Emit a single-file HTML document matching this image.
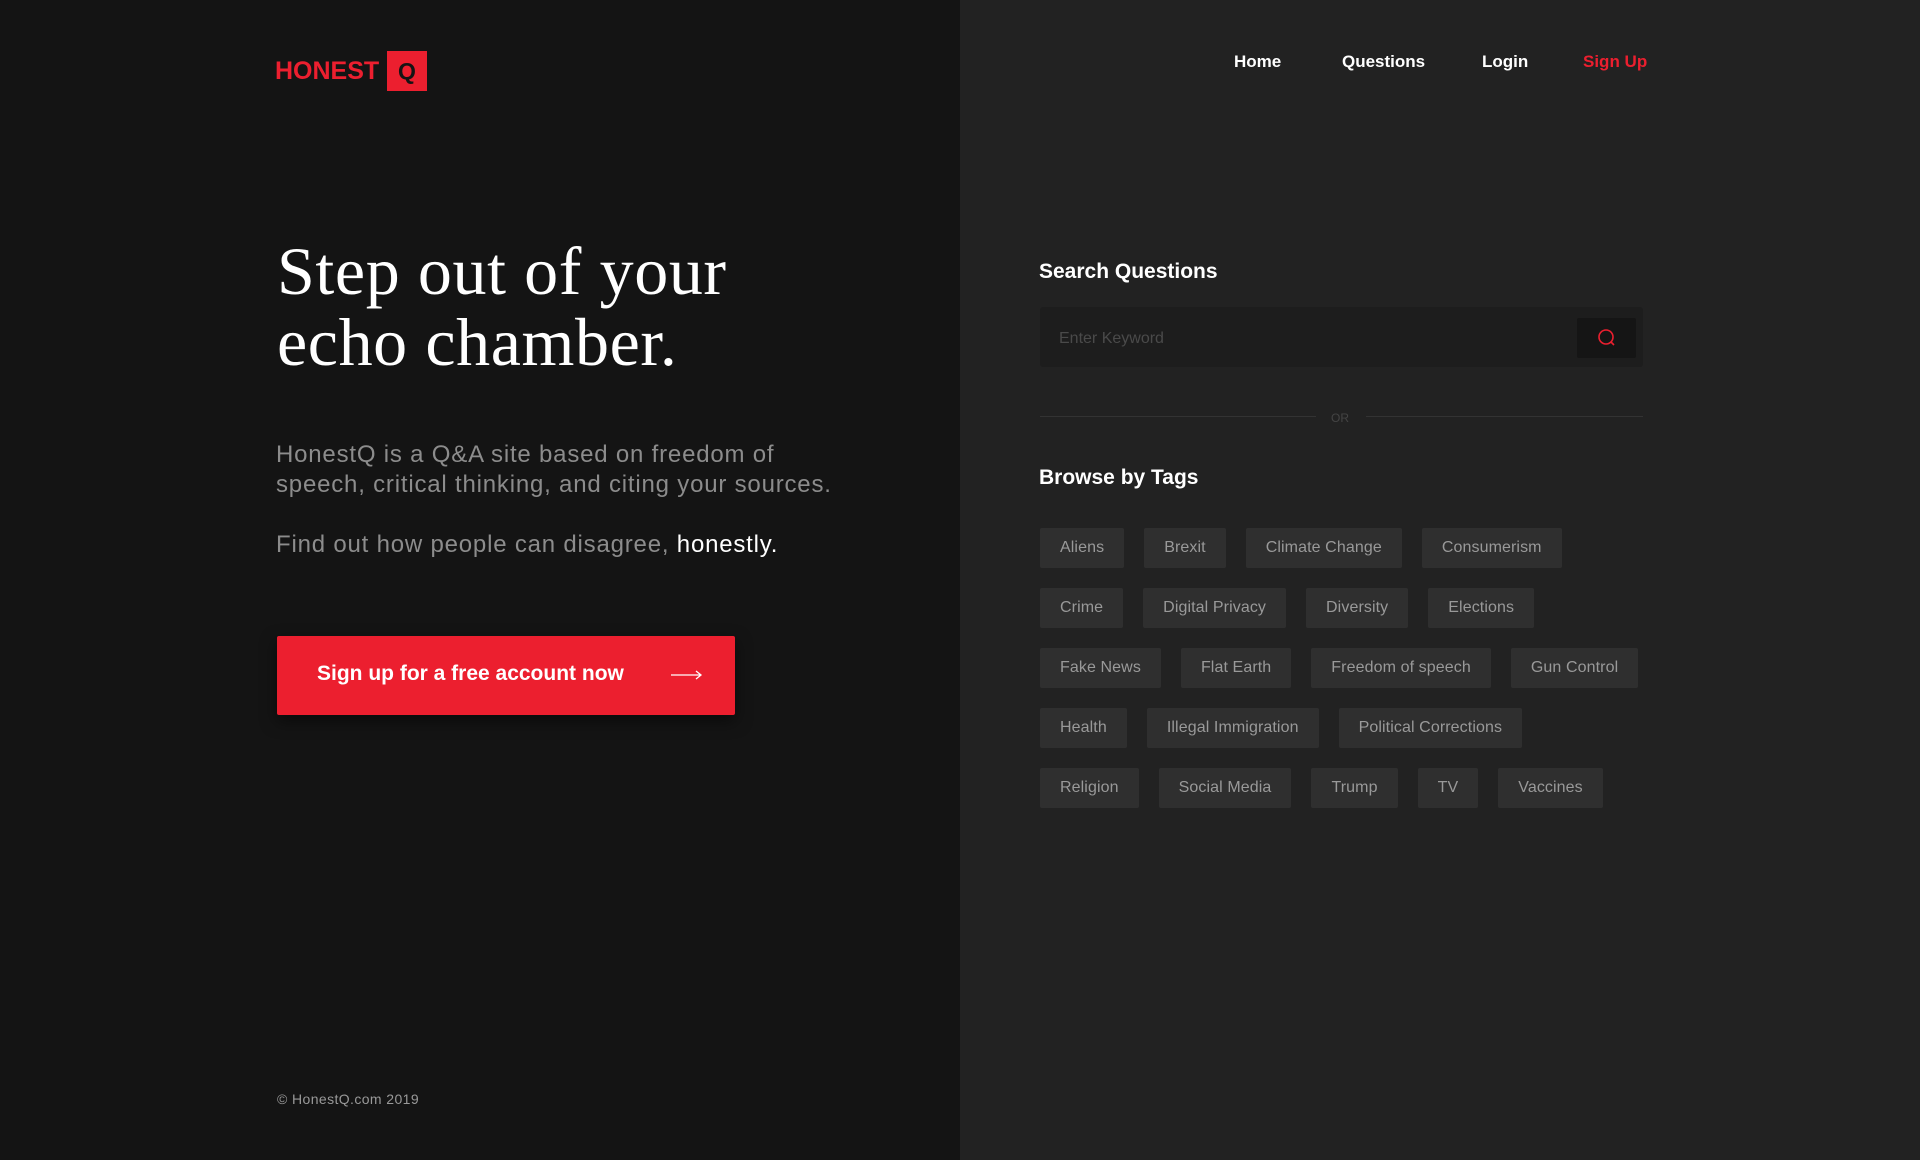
<!DOCTYPE html>
<html><head><meta charset="utf-8"><style>
*{margin:0;padding:0;box-sizing:border-box}
body{width:1920px;height:1160px;overflow:hidden;font-family:"Liberation Sans",sans-serif;background:#222}
.left{position:absolute;left:0;top:0;width:960px;height:1160px;background:#141414}
.right{position:absolute;left:960px;top:0;width:960px;height:1160px;background:#222}
.a{position:absolute;white-space:nowrap}
.logo{left:275px;top:57px;font-size:25px;font-weight:bold;color:#ec1f2f}
.qbox{left:387px;top:51px;width:40px;height:40px;background:#ec1f2f;color:#141414;font-weight:bold;font-size:23px;text-align:center;line-height:40px}
.h1{left:277px;top:236px;font-family:"Liberation Serif",serif;font-size:68px;line-height:71px;color:#fff;letter-spacing:0.6px}
.p{left:276px;font-size:24px;color:#8c8c8c;letter-spacing:0.8px}
.btn{left:277px;top:636px;width:458px;height:79px;background:#ec1f2f;border-radius:2px;box-shadow:0 6px 16px rgba(0,0,0,.5)}
.btn span{position:absolute;left:40px;top:26px;color:#fff;font-weight:bold;font-size:21px}
.foot{left:277px;top:1091px;font-size:14px;color:#999;letter-spacing:0.4px}
.nav{top:52px;font-size:17px;color:#fff;font-weight:bold}
.h2{font-size:21px;color:#fff;font-weight:bold}
.search{left:1040px;top:307px;width:603px;height:60px;background:#1d1d1d;border-radius:3px}
.tags{left:1040px;top:528px;width:640px}
.row{display:flex;gap:20px;margin-bottom:20px}
.tag{height:40px;line-height:40px;padding:0 20px;background:#2f2f2f;color:#999;font-size:16px;letter-spacing:0.1px;border-radius:2px}
</style></head><body>
<div class="left"></div><div class="right"></div>
<div class="a logo">HONEST</div>
<div class="a qbox">Q</div>
<div class="a h1">Step out of your<br>echo chamber.</div>
<div class="a p" style="top:440px;line-height:30px">HonestQ is a Q&amp;A site based on freedom of<br>speech, critical thinking, and citing your sources.</div>
<div class="a p" style="top:530px;line-height:30px">Find out how people can disagree, <span style="color:#fff">honestly.</span></div>
<div class="a btn"><span>Sign up for a free account now</span>
<svg style="position:absolute;left:394px;top:33px" width="32" height="12"><path d="M0 6H30M25 2L30 6L25 10" stroke="#fff" stroke-width="1.3" fill="none"/></svg></div>
<div class="a foot">© HonestQ.com 2019</div>
<div class="a nav" style="left:1234px">Home</div>
<div class="a nav" style="left:1342px">Questions</div>
<div class="a nav" style="left:1482px">Login</div>
<div class="a nav" style="left:1583px;color:#ec1f2f">Sign Up</div>
<div class="a h2" style="left:1039px;top:260px">Search Questions</div>
<div class="a search"><span style="position:absolute;left:19px;top:23px;font-size:16px;color:#4a4a4a">Enter Keyword</span>
<div style="position:absolute;left:537px;top:11px;width:59px;height:40px;background:#151515;border-radius:2px">
<svg style="position:absolute;left:19px;top:10px" width="22" height="22"><circle cx="10" cy="9" r="7" stroke="#ec1f2f" stroke-width="1.6" fill="none"/><path d="M15 14L18 17" stroke="#ec1f2f" stroke-width="1.6"/></svg></div></div>
<div class="a" style="left:1040px;top:416px;width:276px;height:1px;background:#333"></div>
<div class="a" style="left:1366px;top:416px;width:277px;height:1px;background:#333"></div>
<div class="a" style="left:1331px;top:411px;font-size:12px;color:#444">OR</div>
<div class="a h2" style="left:1039px;top:466px">Browse by Tags</div>
<div class="a tags">
<div class="row"><span class="tag">Aliens</span><span class="tag">Brexit</span><span class="tag">Climate Change</span><span class="tag">Consumerism</span></div>
<div class="row"><span class="tag">Crime</span><span class="tag">Digital Privacy</span><span class="tag">Diversity</span><span class="tag">Elections</span></div>
<div class="row"><span class="tag">Fake News</span><span class="tag">Flat Earth</span><span class="tag">Freedom of speech</span><span class="tag">Gun Control</span></div>
<div class="row"><span class="tag">Health</span><span class="tag">Illegal Immigration</span><span class="tag">Political Corrections</span></div>
<div class="row"><span class="tag">Religion</span><span class="tag">Social Media</span><span class="tag">Trump</span><span class="tag">TV</span><span class="tag">Vaccines</span></div>
</div>
</body></html>
